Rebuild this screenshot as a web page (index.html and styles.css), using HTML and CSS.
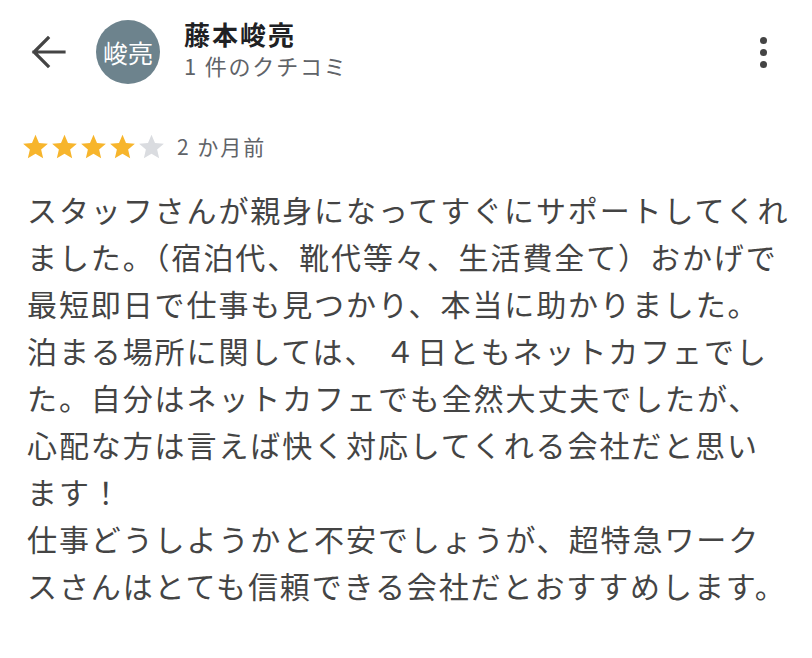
FILE: index.html
```html
<!DOCTYPE html>
<html lang="ja">
<head>
<meta charset="utf-8">
<link rel="stylesheet" href="styles.css">
</head>
<body>
<div class="page">
  <header class="header">
    <button class="back" aria-label="戻る">
      <svg width="36" height="34" viewBox="0 0 36 34">
        <path d="M3 17H33M17 3L3 17L17 31" fill="none" stroke="#444" stroke-width="3.2" stroke-linecap="square" stroke-linejoin="miter"/>
      </svg>
    </button>
    <div class="avatar">峻亮</div>
    <div class="who">
      <div class="name">藤本峻亮</div>
      <div class="count">1 件のクチコミ</div>
    </div>
    <div class="more" aria-label="メニュー">
      <span class="dot"></span><span class="dot"></span><span class="dot"></span>
    </div>
  </header>

  <div class="meta">
    <div class="stars">
      <svg class="star on" viewBox="0 0 24 24"><path d="M12 1.5l3.1 7.3 7.9.7-6 5.2 1.8 7.8L12 18.4l-6.8 4.1 1.8-7.8-6-5.2 7.9-.7z"/></svg>
      <svg class="star on" viewBox="0 0 24 24"><path d="M12 1.5l3.1 7.3 7.9.7-6 5.2 1.8 7.8L12 18.4l-6.8 4.1 1.8-7.8-6-5.2 7.9-.7z"/></svg>
      <svg class="star on" viewBox="0 0 24 24"><path d="M12 1.5l3.1 7.3 7.9.7-6 5.2 1.8 7.8L12 18.4l-6.8 4.1 1.8-7.8-6-5.2 7.9-.7z"/></svg>
      <svg class="star on" viewBox="0 0 24 24"><path d="M12 1.5l3.1 7.3 7.9.7-6 5.2 1.8 7.8L12 18.4l-6.8 4.1 1.8-7.8-6-5.2 7.9-.7z"/></svg>
      <svg class="star off" viewBox="0 0 24 24"><path d="M12 1.5l3.1 7.3 7.9.7-6 5.2 1.8 7.8L12 18.4l-6.8 4.1 1.8-7.8-6-5.2 7.9-.7z"/></svg>
    </div>
    <span class="date">2 か月前</span>
  </div>

  <p class="review">スタッフさんが親身になってすぐにサポートしてくれ<br>ました。（宿泊代、靴代等々、生活費全て）おかげで<br>最短即日で仕事も見つかり、本当に助かりました。<br>泊まる場所に関しては、 ４日ともネットカフェでし<br>た。自分はネットカフェでも全然大丈夫でしたが、<br>心配な方は言えば快く対応してくれる会社だと思い<br>ます！<br>仕事どうしようかと不安でしょうが、超特急ワーク<br>スさんはとても信頼できる会社だとおすすめします。</p>
</div>
</body>
</html>
```

FILE: styles.css
```css
html, body {
  margin: 0;
  padding: 0;
  background: #ffffff;
}

body {
  font-family: "Noto Sans CJK JP", "Noto Sans", sans-serif;
  color: #444444;
}

.page {
  width: 812px;
  height: 658px;
  overflow: hidden;
}

.header {
  display: flex;
  align-items: center;
  height: 104px;
  padding: 0 0 0 31px;
  box-sizing: border-box;
}

.back {
  display: flex;
  align-items: center;
  justify-content: center;
  width: 36px;
  height: 34px;
  padding: 0;
  margin: 0;
  border: none;
  background: none;
}

.back svg {
  display: block;
}

.avatar {
  width: 64px;
  height: 64px;
  border-radius: 50%;
  background: #6d838d;
  color: #ffffff;
  font-size: 25px;
  line-height: 64px;
  text-align: center;
  margin-left: 29px;
  flex-shrink: 0;
}

.who {
  margin-left: 24px;
  display: flex;
  flex-direction: column;
  flex: 1;
}

.name {
  font-size: 26px;
  font-weight: 700;
  color: #202124;
  letter-spacing: 2px;
  line-height: 32px;
  margin-top: -6px;
}

.count {
  font-size: 22px;
  color: #5f6368;
  letter-spacing: 1.8px;
  line-height: 30px;
  margin-top: 0px;
}

.more {
  display: flex;
  flex-direction: column;
  gap: 5px;
  align-items: center;
  width: 20px;
  margin-right: 39px;
}

.dot {
  width: 7px;
  height: 7px;
  border-radius: 50%;
  background: #444444;
}

.meta {
  display: flex;
  align-items: center;
  margin: 29px 0 0 22px;
  height: 26px;
}

.stars {
  display: flex;
  gap: 2px;
}

.star {
  width: 27px;
  height: 27px;
  display: block;
}

.star.on { fill: #f7b52c; }
.star.off { fill: #dadce0; }

.date {
  margin-left: 12px;
  font-size: 21px;
  color: #5f6368;
  letter-spacing: 2px;
  line-height: 26px;
}

.review {
  margin: 27px 0 0 27px;
  font-size: 30px;
  line-height: 47px;
  letter-spacing: 1.9px;
  color: #444444;
  white-space: nowrap;
}
```
